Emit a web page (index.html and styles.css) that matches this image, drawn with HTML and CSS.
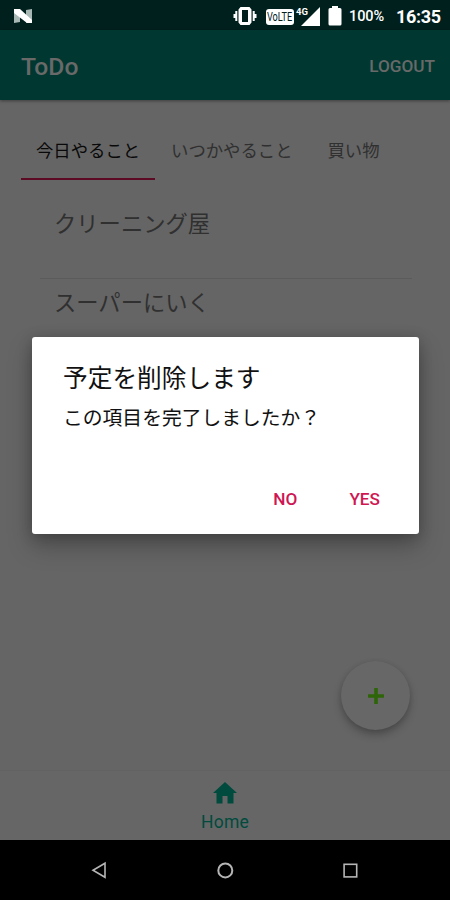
FILE: index.html
```html
<!DOCTYPE html>
<html lang="ja">
<head>
<meta charset="utf-8">
<title>ToDo</title>
<link rel="stylesheet" href="styles.css">
</head>
<body>
<div class="screen">
  <header class="status">
    <svg class="logo" width="20" height="16" viewBox="0 0 20 16"><path d="M1 2L7 1V14L1 15ZM13 2L19 1V14L13 15Z" fill="#a8b9b5"/><path d="M1 1H7L19 12V15H14L1 5Z" fill="#fff"/></svg>
    <svg class="vibrate" width="24" height="20" viewBox="0 0 24 20" fill="#fff"><path fill-rule="evenodd" d="M7.500 1H16.500L18.500 3.500V16.500L16.500 19H7.500L5.500 16.500V3.500ZM9 4V16H15V4Z"/><path d="M2.300 5H4.300V15H2.300ZM.5 8H2.300V12H.5ZM19.700 5H21.700V15H19.700ZM21.700 8H23.500V12H21.700Z"/></svg>
    <span class="volte"><span>VoLTE</span></span>
    <span class="signal"><small>4G</small><svg width="19" height="19" viewBox="0 0 19 19"><path d="M19 0V19H0Z" fill="#fff"/></svg></span>
    <svg class="battery" width="14" height="20" viewBox="0 0 14 20"><path d="M4 0H10V2H12Q13.500 2 13.500 3.500V18Q13.500 19.500 12 19.500H2Q.5 19.500 .5 18V3.500Q.5 2 2 2H4Z" fill="#fff"/></svg>
    <span class="percent">100%</span>
    <time class="clock">16:35</time>
  </header>
  <div class="appbar"><h1>ToDo</h1><span class="logout">LOGOUT</span></div>
  <main class="content">
    <nav class="tabs"><span class="tab active">今日やること</span><span class="tab">いつかやること</span><span class="tab">買い物</span></nav>
    <ul class="list"><li>クリーニング屋</li><li>スーパーにいく</li></ul>
    <button class="fab" aria-label="追加"><svg width="18" height="18" viewBox="0 0 18 18"><path d="M9 1V17M1 9H17" stroke="#2f6509" stroke-width="3.600"/></svg></button>
  </main>
  <nav class="bottom">
    <svg width="24" height="22" viewBox="0 0 24 22"><path d="M12 0L24 11H20.500V21.500H14.500V14H9.500V21.500H3.500V11H0Z" fill="#004b3e"/></svg>
    <span>Home</span>
  </nav>
  <footer class="system">
    <svg width="450" height="60" viewBox="0 0 450 60" fill="none" stroke="#b5b5b5" stroke-width="1.600"><path d="M105 23.200V37.300L93 30.200Z"/><circle cx="225.300" cy="30.400" r="7" stroke-width="2"/><rect x="344.100" y="24.300" width="12.600" height="12.600"/></svg>
  </footer>
  <section class="dialog" role="dialog">
    <h2>予定を削除します</h2>
    <p>この項目を完了しましたか？</p>
    <div class="actions"><span>NO</span><span>YES</span></div>
  </section>
</div>
</body>
</html>
```
FILE: styles.css
```css
* { box-sizing: border-box; }
body { margin: 0; font-family: Roboto, "Noto Sans CJK JP", sans-serif; }
h1, h2, p, ul { margin: 0; padding: 0; font-weight: 400; }
.screen {
  position: relative;
  display: grid;
  grid-template-rows: 30px 70px 1fr 70px 60px;
  width: 450px;
  height: 900px;
  overflow: hidden;
  background: #656565;
}
.status { display: flex; align-items: center; padding: 2px 9px 0 13px; background: #00201e; color: #fff; }
.logo { margin-right: auto; }
.volte {
  display: flex;
  align-items: center;
  justify-content: center;
  width: 28px;
  height: 16px;
  margin: 2px 0 0 9px;
  border-radius: 3px;
  background: #fff;
  color: #00201e;
  font-size: 12px;
}
.volte span { transform: scaleX(.76); }
.signal { position: relative; display: flex; margin-left: 7px; }
.signal small { position: absolute; left: -5px; top: 0; font-size: 9.500px; line-height: 9px; font-weight: 700; }
.battery { margin-left: 8px; }
.percent { width: 35px; margin-left: 7px; font-size: 14.500px; font-weight: 500; letter-spacing: -.1px; }
.clock { width: 45px; margin-left: 12px; font-size: 18px; font-weight: 700; letter-spacing: -.3px; }
.appbar {
  z-index: 1;
  display: flex;
  align-items: center;
  justify-content: space-between;
  padding: 3px 15px 0 21px;
  background: #003831;
  color: #696969;
  box-shadow: 0 1px 3px rgba(0, 0, 0, .4);
}
.appbar h1 { font-size: 24.700px; font-weight: 500; }
.logout { margin-top: -1px; font-size: 17.200px; font-weight: 500; }
.content { position: relative; padding: 20px 21px 0; }
.tabs { display: flex; height: 60px; font-size: 17.350px; line-height: 62px; color: #303030; }
.tab { padding: 0 15px; white-space: nowrap; }
.tab + .tab { padding-left: 16px; padding-right: 19px; }
.tab.active { color: #090909; border-bottom: 2px solid #5d0a25; }
.list { margin: 19px 17px 0 19px; list-style: none; }
.list li { height: 80px; padding-left: 14px; font-size: 22.300px; line-height: 51px; color: #303030; }
.list li:first-child { border-bottom: 1px solid #5b5b5b; }
.list li + li { line-height: 48px; }
.fab {
  position: absolute;
  right: 40px;
  bottom: 40px;
  display: grid;
  place-items: center;
  width: 69px;
  height: 69px;
  padding: 0;
  border: 0;
  border-radius: 50%;
  background: #676767;
  box-shadow: 0 5px 8px rgba(0, 0, 0, .24), 0 1px 5px rgba(0, 0, 0, .1);
}
.bottom {
  display: flex;
  flex-direction: column;
  align-items: center;
  padding-top: 11px;
  border-top: 1px solid #626262;
  background: #666;
  color: #004b3e;
  font-size: 17.500px;
}
.bottom span { margin-top: 7px; line-height: 22px; letter-spacing: .2px; }
.system { background: #000; }
.system svg { display: block; }
.dialog {
  position: absolute;
  z-index: 2;
  left: 32px;
  top: 337px;
  width: 387px;
  height: 197px;
  padding: 23px 31px 0 31px;
  border-radius: 3px;
  background: #fff;
  color: #111;
  box-shadow: 0 12px 24px rgba(0, 0, 0, .26), 0 2px 14px rgba(0, 0, 0, .2);
}
.dialog h2 { font-size: 24.700px; line-height: 38px; }
.dialog p { margin-top: 5px; font-size: 19.800px; line-height: 32px; }
.actions {
  display: flex;
  justify-content: flex-end;
  gap: 52px;
  margin-top: 52px;
  padding-right: 8px;
  color: #cf1753;
  font-size: 17.200px;
  font-weight: 500;
  line-height: 24px;
}
```
